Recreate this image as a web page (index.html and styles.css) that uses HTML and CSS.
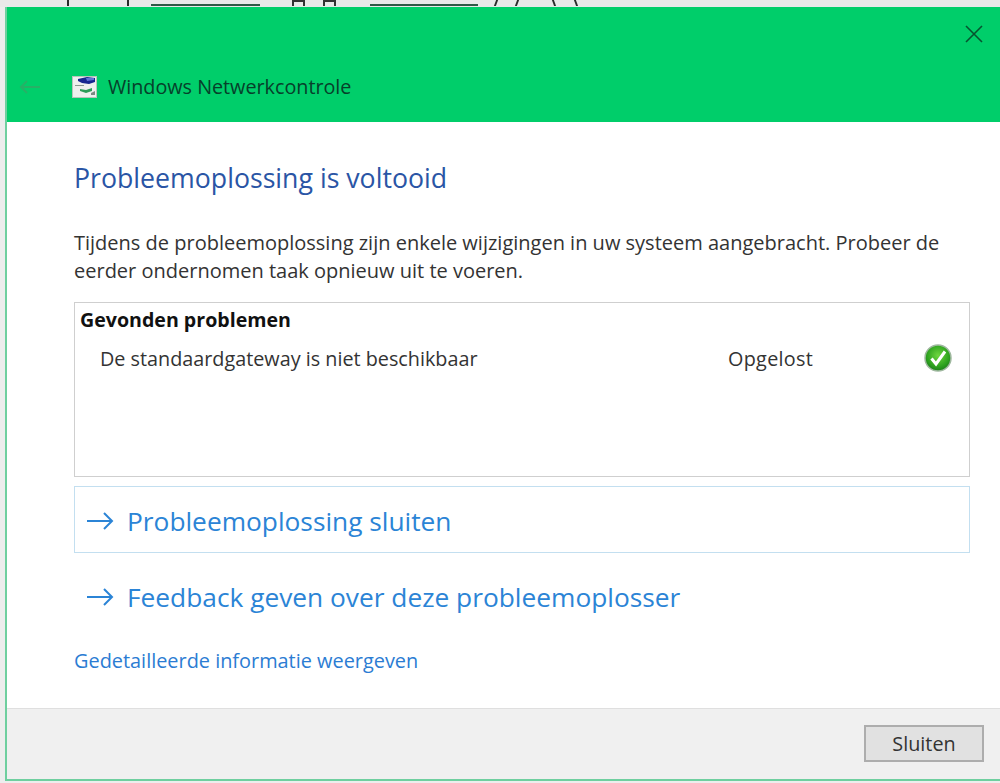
FILE: index.html
```html
<!DOCTYPE html>
<html lang="en">
<head>
  <meta charset="UTF-8">
  <meta name="viewport" content="width=device-width, initial-scale=1.0">
  <title>Windows Netwerkcontrole</title>
  <link rel="stylesheet" href="styles.css">
</head>
<body>
  <!-- Stuk van het venster erachter -->
  <div class="behind">
    <span class="tick tick-a"></span>
    <span class="tick tick-b"></span>
    <span class="dash dash-a"></span>
    <span class="post post-a"></span>
    <span class="post post-b"></span>
    <span class="dash dash-b"></span>
    <span class="tick tick-c"></span>
    <span class="tick tick-d"></span>
    <span class="tick tick-e"></span>
    <span class="tick tick-f"></span>
  </div>

  <div class="window">
    <div class="titlebar">
      <button class="close-btn" aria-label="Sluiten">
        <svg width="18" height="18" viewBox="0 0 18 18"><path d="M1 1L17 17M17 1L1 17" stroke="#07522f" stroke-width="1.6" fill="none"/></svg>
      </button>
      <div class="title-row">
        <svg class="back-icon" width="22" height="14" viewBox="0 0 22 14"><path d="M21 7H2M8 1L2 7l6 6" stroke="#27b066" stroke-width="1.8" fill="none"/></svg>
        <svg class="app-icon" width="25" height="22" viewBox="0 0 25 22">
          <rect width="25" height="22" fill="#eef0ee"/>
          <rect x="0.5" y="0.5" width="24" height="21" fill="none" stroke="#b9c4bc"/>
          <path d="M6 3l9-2 8 1v4l-6 2-7-1-4-2z" fill="#16268f"/>
          <path d="M14 2l8 0v2l-7 1z" fill="#5f74d6"/>
          <path d="M3 9h9v1H3z" fill="#8a9a90"/>
          <path d="M8 13l6 1 6-2v3l-6 2-6-2z" fill="#2c9c58"/>
          <path d="M19 17l4-2v4h-4z" fill="#7c8a82"/>
        </svg>
        <span class="app-title">Windows Netwerkcontrole</span>
      </div>
    </div>

    <div class="content">
      <h1>Probleemoplossing is voltooid</h1>
      <p class="intro">Tijdens de probleemoplossing zijn enkele wijzigingen in uw systeem aangebracht. Probeer de eerder ondernomen taak opnieuw uit te voeren.</p>

      <div class="problems">
        <div class="problems-label">Gevonden problemen</div>
        <div class="problem-row">
          <span class="problem-name">De standaardgateway is niet beschikbaar</span>
          <span class="problem-status">Opgelost</span>
          <svg class="check-icon" width="28" height="28" viewBox="0 0 28 28">
            <defs>
              <radialGradient id="checkFill" cx="50%" cy="40%" r="60%">
                <stop offset="0%" stop-color="#6fd63f"/>
                <stop offset="70%" stop-color="#2ea31f"/>
                <stop offset="100%" stop-color="#1c7f1a"/>
              </radialGradient>
            </defs>
            <circle cx="14" cy="14" r="13" fill="url(#checkFill)" stroke="#9fb89f" stroke-width="1.5"/>
            <path d="M7.5 14.5l4.5 5.5L21 7.5" stroke="#fff" stroke-width="3" fill="none"/>
          </svg>
        </div>
      </div>

      <a class="command command-selected" href="#">
        <svg class="arrow" width="28" height="20" viewBox="0 0 28 20"><path d="M1 10H26M18 2l8 8-8 8" stroke="#2b84d6" stroke-width="2" fill="none"/></svg>
        <span>Probleemoplossing sluiten</span>
      </a>
      <a class="command" href="#">
        <svg class="arrow" width="28" height="20" viewBox="0 0 28 20"><path d="M1 10H26M18 2l8 8-8 8" stroke="#2b84d6" stroke-width="2" fill="none"/></svg>
        <span>Feedback geven over deze probleemoplosser</span>
      </a>

      <a class="details-link" href="#">Gedetailleerde informatie weergeven</a>
    </div>

    <div class="footer">
      <button class="footer-btn">Sluiten</button>
    </div>
  </div>
</body>
</html>
```

FILE: styles.css
```css
html, body {
  margin: 0;
  height: 100%;
}
body {
  font-family: "Open Sans", "Noto Sans", sans-serif;
  background-color: #ededed;
  color: #333;
  overflow: hidden;
}
.behind {
  display: flex;
  align-items: flex-start;
  height: 7px;
  background-color: #e9e9e9;
}
.tick {
  width: 2px;
  height: 6px;
  background-color: #2b2b2b;
}
.tick-a { margin-left: 67px; }
.tick-b { margin-left: 58px; }
.tick-c { margin-left: 17px; transform: skewX(-20deg); }
.tick-d { margin-left: 19px; transform: skewX(-20deg); }
.tick-e { margin-left: 35px; transform: skewX(20deg); }
.tick-f { margin-left: 20px; transform: skewX(20deg); }
.dash {
  height: 2px;
  margin-top: 4px;
  background-color: #2f5a46;
}
.dash-a { width: 109px; margin-left: 22px; }
.dash-b { width: 108px; margin-left: 34px; }
.post {
  width: 13px;
  height: 6px;
  border: 2px solid #333;
  border-bottom: none;
  box-sizing: border-box;
}
.post-a { margin-left: 32px; }
.post-b { margin-left: 18px; }

.window {
  display: flex;
  flex-direction: column;
  height: 774px;
  margin-left: 5px;
  border-left: 2px solid #6fcf9f;
  border-bottom: 2px solid #6fcf9f;
  box-sizing: border-box;
  background-color: white;
}
.titlebar {
  display: flex;
  flex-direction: column;
  justify-content: space-between;
  height: 115px;
  flex: none;
  padding: 18px 17px 22px 12px;
  box-sizing: border-box;
  background-color: #00ce6a;
}
.close-btn {
  align-self: flex-end;
  width: 18px;
  height: 18px;
  padding: 0;
  border: none;
  background: none;
  line-height: 0;
}
.title-row {
  display: flex;
  align-items: center;
}
.back-icon {
  margin-right: 31px;
}
.app-icon {
  margin-right: 11px;
}
.app-title {
  font-size: 19.8px;
  letter-spacing: -0.02px;
  color: #07402a;
}

.content {
  flex: 1;
  padding: 0 30px 0 67px;
}
h1 {
  margin: 36px 0 0;
  font-size: 26.7px;
  line-height: 40px;
  font-weight: 400;
  color: #2a55a5;
}
.intro {
  margin: 31px 0 0;
  font-size: 20px;
  line-height: 28px;
  color: #333;
}
.problems {
  height: 175px;
  margin-top: 17px;
  padding: 3px 5px;
  border: 1px solid #cfcfcf;
  box-sizing: border-box;
}
.problems-label {
  font-size: 19.6px;
  line-height: 28px;
  font-weight: 700;
  color: #111;
}
.problem-row {
  display: flex;
  align-items: center;
  margin-top: 10px;
  padding-left: 20px;
  font-size: 19.8px;
  color: #333;
}
.problem-name {
  flex: 0 0 628px;
}
.problem-status {
  flex: 1;
  letter-spacing: 0.3px;
}
.check-icon {
  margin-right: 12px;
}
.command {
  display: flex;
  align-items: center;
  height: 67px;
  padding: 3px 0 0 11px;
  border: 1px solid transparent;
  box-sizing: border-box;
  font-size: 26.3px;
  color: #2b84d6;
  text-decoration: none;
}
.command-selected {
  margin-top: 9px;
  border-color: #c3dff0;
}
.command:not(.command-selected) {
  margin-top: 9px;
}
.arrow {
  margin-right: 13px;
}
.details-link {
  display: block;
  margin: 18px 0 0;
  font-size: 19.9px;
  line-height: 28px;
  color: #2b7cd3;
  text-decoration: none;
}
.footer {
  display: flex;
  justify-content: flex-end;
  align-items: flex-start;
  height: 71px;
  flex: none;
  padding: 16px 16px 0 0;
  border-top: 1px solid #dfdfdf;
  box-sizing: border-box;
  background-color: #f0f0f0;
}
.footer-btn {
  width: 120px;
  height: 37px;
  border: 2px solid #adadad;
  background-color: #e1e1e1;
  font-family: inherit;
  font-size: 19.8px;
  line-height: 1;
  color: #333;
}
```
